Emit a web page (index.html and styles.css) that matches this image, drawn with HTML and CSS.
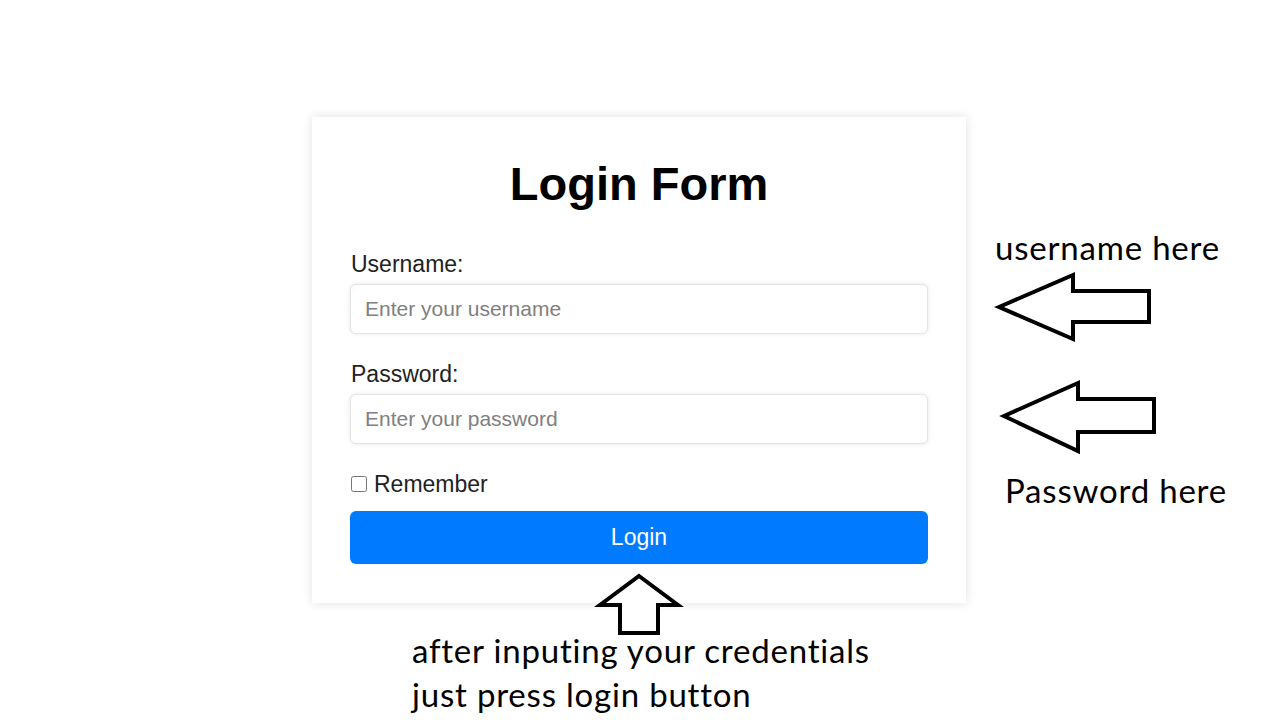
FILE: index.html
```html
<!DOCTYPE html>
<html lang="en">
<head>
  <meta charset="UTF-8">
  <meta name="viewport" content="width=device-width, initial-scale=1.0">
  <title>Login Form</title>
  <link rel="stylesheet" href="styles.css">
</head>
<body>
  <div class="stage">
    <!-- login card -->
    <form class="card" onsubmit="return false;">
      <h1>Login Form</h1>
      <label class="field-label" for="username">Username:</label>
      <input class="field" type="text" id="username" placeholder="Enter your username">
      <label class="field-label" for="password">Password:</label>
      <input class="field" type="password" id="password" placeholder="Enter your password">
      <label class="remember"><input type="checkbox"> Remember</label>
      <button class="login-btn" type="submit">Login</button>
    </form>

    <!-- hand drawn notes over the slide -->
    <p class="note note-user">username here</p>
    <p class="note note-pass">Password here</p>
    <p class="note note-login">after inputing your credentials<br>just press login button</p>

    <svg class="arrow arrow-user" width="170" height="80" viewBox="990 268 170 80">
      <polygon points="999,307 1073,275 1073,291 1149,291 1149,322 1073,322 1073,339" />
    </svg>
    <svg class="arrow arrow-pass" width="170" height="80" viewBox="995 376 170 80">
      <polygon points="1004,416 1078,383 1078,399 1154,399 1154,432 1078,432 1078,451" />
    </svg>
    <svg class="arrow arrow-login" width="90" height="66" viewBox="594 570 90 66">
      <polygon points="639,576 678,605 658,605 658,633 620,633 620,605 600,605" />
    </svg>
  </div>
</body>
</html>
```

FILE: styles.css
```css
/* --- page --- */
body {
  margin: 0;
  background: #fff;
  font-family: "Liberation Sans", Arial, sans-serif;
  color: #222;
}
.stage {
  position: relative;
  width: 1280px;
  height: 720px;
  padding: 117px 0 0 312px;
  box-sizing: border-box;
}
/* --- login card --- */
.card {
  width: 654px;
  box-sizing: border-box;
  padding: 40px 38px 39px;
  background: #fff;
  box-shadow: 0 0 10px rgba(0,0,0,0.12);
  display: flex;
  flex-direction: column;
}
.card h1 {
  margin: 0 0 41px;
  text-align: center;
  font-size: 47px;
  line-height: 54px;
  color: #000;
}
.field-label {
  font-size: 23px;
  line-height: 24px;
  margin: 0 0 8px 1px;
}
.field {
  height: 50px;
  margin-bottom: 28px;
  padding: 0 14px;
  font-family: inherit;
  font-size: 21px;
  color: #333;
  border: 1px solid #e4e4e4;
  border-radius: 6px;
  box-shadow: 0 0 4px rgba(0,0,0,0.1);
  box-sizing: border-box;
  outline: none;
}
.field::placeholder {
  color: #808080;
}
.remember {
  display: flex;
  align-items: center;
  gap: 7px;
  font-size: 23px;
  line-height: 24px;
  margin: 0 0 15px 1px;
}
.remember input {
  width: 16px;
  height: 16px;
  margin: 0;
}
.login-btn {
  height: 53px;
  border: none;
  border-radius: 6px;
  background: #007bff;
  color: #fff;
  font-family: inherit;
  font-size: 23px;
  cursor: pointer;
}
/* --- notes on the slide --- */
.note {
  position: absolute;
  margin: 0;
  font-family: Lato, "Open Sans", sans-serif;
  font-size: 33px;
  line-height: 44px;
  letter-spacing: 0.8px;
  color: #000;
  white-space: nowrap;
}
.note-user { left: 995px; top: 225px; }
.note-pass { left: 1005px; top: 468px; }
.note-login { left: 412px; top: 628px; }
.arrow {
  position: absolute;
}
.arrow polygon {
  fill: #fff;
  stroke: #000;
  stroke-width: 4;
  stroke-linejoin: miter;
}
.arrow-user { left: 990px; top: 268px; }
.arrow-pass { left: 995px; top: 376px; }
.arrow-login { left: 594px; top: 570px; }
```
